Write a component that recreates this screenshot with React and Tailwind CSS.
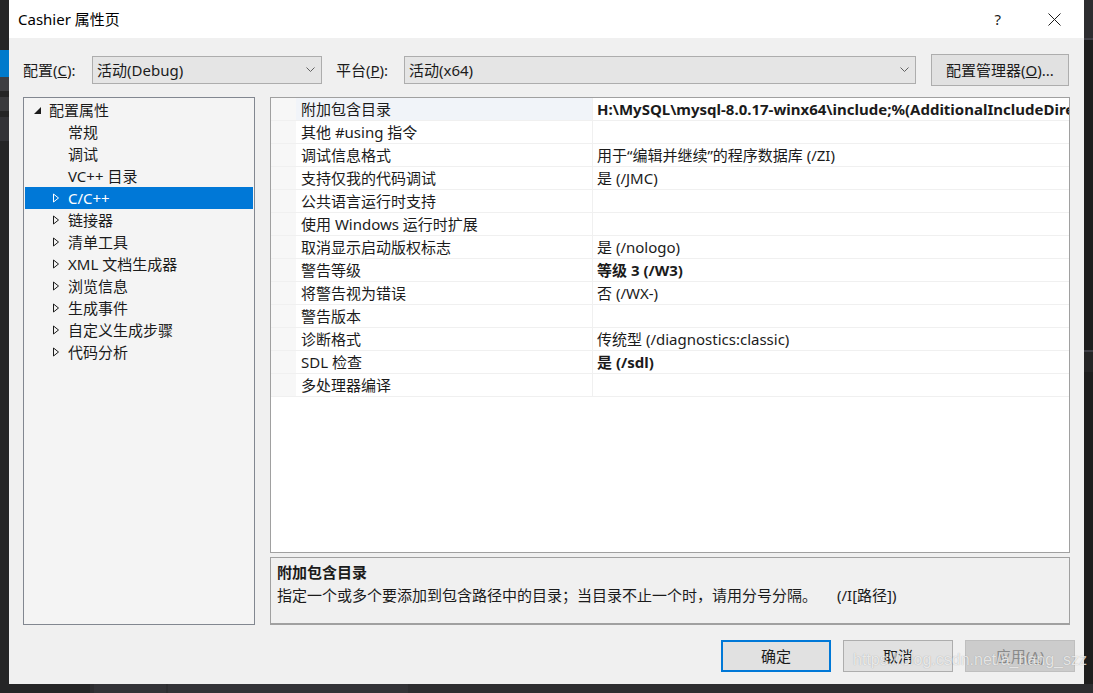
import React from 'react';

const font = { fontFamily: '"Noto Sans", "Noto Sans CJK SC", sans-serif' };

const tree = [
  { label: '常规', kind: 'leaf' },
  { label: '调试', kind: 'leaf' },
  { label: 'VC++ 目录', kind: 'leaf' },
  { label: 'C/C++', kind: 'node', selected: true },
  { label: '链接器', kind: 'node' },
  { label: '清单工具', kind: 'node' },
  { label: 'XML 文档生成器', kind: 'node' },
  { label: '浏览信息', kind: 'node' },
  { label: '生成事件', kind: 'node' },
  { label: '自定义生成步骤', kind: 'node' },
  { label: '代码分析', kind: 'node' },
];

const props = [
  ['附加包含目录', 'H:\\MySQL\\mysql-8.0.17-winx64\\include;%(AdditionalIncludeDirectories)', true],
  ['其他 #using 指令', '', false],
  ['调试信息格式', '用于“编辑并继续”的程序数据库 (/ZI)', false],
  ['支持仅我的代码调试', '是 (/JMC)', false],
  ['公共语言运行时支持', '', false],
  ['使用 Windows 运行时扩展', '', false],
  ['取消显示启动版权标志', '是 (/nologo)', false],
  ['警告等级', '等级 3 (/W3)', true],
  ['将警告视为错误', '否 (/WX-)', false],
  ['警告版本', '', false],
  ['诊断格式', '传统型 (/diagnostics:classic)', false],
  ['SDL 检查', '是 (/sdl)', true],
  ['多处理器编译', '', false],
];

function Chevron() {
  return (
    <svg width="9" height="6" viewBox="0 0 9 6" className="shrink-0">
      <polyline points="0.5,0.5 4.5,4.5 8.5,0.5" fill="none" stroke="#606060" strokeWidth="1" />
    </svg>
  );
}

function Combo({ value, width }) {
  return (
    <div className={`${width} h-[28px] bg-[#e5e5e5] border border-[#adadad] flex items-center justify-between pl-[4px] pr-[6px]`}>
      <span className="text-[15px] leading-none text-[#1b1b1b]">{value}</span>
      <Chevron />
    </div>
  );
}

function TreeRow({ item }) {
  const sel = item.selected;
  return (
    <div className={`h-[22px] flex items-center ${sel ? 'bg-[#0078d7] text-white' : 'text-[#1b1b1b]'}`}>
      <div className="w-[28px] shrink-0" />
      <div className="w-[7px] shrink-0 flex items-center">
        {item.kind === 'node' && (
          <svg width="7" height="10" viewBox="0 0 7 10">
            <polygon points="0.5,1 5.5,5 0.5,9" fill="none" stroke={sel ? '#ffffff' : '#1b1b1b'} strokeWidth="1" />
          </svg>
        )}
      </div>
      <span className="ml-[8px] text-[15px] leading-none whitespace-nowrap">{item.label}</span>
    </div>
  );
}

function Button({ children, primary, disabled }) {
  return (
    <div
      className={`w-[110px] h-[32px] flex items-center justify-center text-[15px] leading-none ${
        primary
          ? 'border-2 border-[#0078d7] bg-[#e1e1e1] text-[#1b1b1b]'
          : disabled
          ? 'border border-[#bfbfbf] bg-[#cccccc] text-[#8a8a8a]'
          : 'border border-[#adadad] bg-[#e1e1e1] text-[#1b1b1b]'
      }`}
    >
      {children}
    </div>
  );
}

export default function App() {
  return (
    <div className="w-[1093px] h-[693px] bg-[#2d2d30] flex flex-col overflow-hidden" style={font}>
      <div className="flex h-[684px]">
        {/* left edge of the IDE behind */}
        <div className="w-[9px] bg-[#252526] flex flex-col">
          <div className="h-[50px]" />
          <div className="h-[27px] bg-[#007acc]" />
          <div className="h-[14px] bg-[#3e3e42]" />
          <div className="h-[6px]" />
          <div className="h-[14px] bg-[#3a3a3d]" />
          <div className="h-[6px]" />
          <div className="h-[24px] bg-[#333337]" />
        </div>

        {/* dialog */}
        <div className="w-[1075px] flex flex-col bg-[#f0f0f0]">
          {/* title bar */}
          <div className="h-[38px] bg-white flex items-center pl-[9px] pr-[23px]">
            <span className="text-[15px] leading-none text-black">Cashier 属性页</span>
            <div className="flex-1" />
            <span className="text-[15px] leading-none text-[#1b1b1b] mr-[47px]">?</span>
            <svg width="13" height="13" viewBox="0 0 13 13">
              <path d="M0.5 0.5 L12.5 12.5 M12.5 0.5 L0.5 12.5" stroke="#1b1b1b" strokeWidth="1" />
            </svg>
          </div>

          <div className="flex flex-col px-[14px] pt-[16px] flex-1">
            {/* configuration row */}
            <div className="flex items-center h-[32px] pr-[1px]">
              <span className="w-[69px] text-[15px] leading-none text-[#1b1b1b]">
                配置(<span className="underline">C</span>):
              </span>
              <Combo value="活动(Debug)" width="w-[230px]" />
              <span className="ml-[14px] w-[68px] text-[15px] leading-none text-[#1b1b1b]">
                平台(<span className="underline">P</span>):
              </span>
              <Combo value="活动(x64)" width="w-[512px]" />
              <div className="ml-[15px] w-[138px] h-[32px] bg-[#e1e1e1] border border-[#adadad] flex items-center justify-center text-[15px] leading-none text-[#1b1b1b]">
                配置管理器(<span className="underline">O</span>)...
              </div>
            </div>

            {/* panels */}
            <div className="flex mt-[11px] h-[528px]">
              {/* tree */}
              <div className="w-[232px] border border-[#828790] bg-[#f4f4f4] pt-[1px] px-[1px]">
                <div className="h-[22px] flex items-center text-[#1b1b1b]">
                  <div className="w-[16px] flex justify-end">
                    <svg width="7" height="7" viewBox="0 0 7 7">
                      <polygon points="7,0 7,7 0,7" fill="#1b1b1b" />
                    </svg>
                  </div>
                  <span className="ml-[8px] text-[15px] leading-none">配置属性</span>
                </div>
                {tree.map((t) => (
                  <TreeRow key={t.label} item={t} />
                ))}
              </div>

              {/* grid + description */}
              <div className="ml-[15px] w-[800px] flex flex-col">
                <div className="h-[456px] border border-[#a0a0a0] bg-white overflow-hidden">
                  {props.map(([name, value, bold], i) => (
                    <div key={name} className="h-[23px] flex border-b border-[#f0f0f0]">
                      <div className="w-[25px] bg-[#f7f7f7] shrink-0" />
                      <div
                        className={`w-[297px] shrink-0 flex items-center pl-[5px] border-r border-[#f0f0f0] text-[15px] leading-none text-[#1b1b1b] whitespace-nowrap ${
                          i === 0 ? 'bg-[#f1f4f9]' : ''
                        }`}
                      >
                        {name}
                      </div>
                      <div
                        className={`flex-1 min-w-0 overflow-hidden flex items-center pl-[4px] text-[15px] leading-none text-[#1b1b1b] whitespace-nowrap ${
                          bold ? 'font-bold' : ''
                        }`}
                      >
                        {value}
                      </div>
                    </div>
                  ))}
                </div>
                <div className="mt-[4px] h-[68px] border border-[#a0a0a0] border-b-2 bg-[#f0f0f0] px-[6px] pt-[5px] text-[#1b1b1b]">
                  <div className="h-[18px] flex items-center text-[15px] leading-none font-bold">附加包含目录</div>
                  <div className="h-[22px] mt-[3px] flex items-center text-[15px] leading-none whitespace-nowrap">
                    指定一个或多个要添加到包含路径中的目录；当目录不止一个时，请用分号分隔。
                    <span className="ml-[20px]">(/I[路径])</span>
                  </div>
                </div>
              </div>
            </div>

            {/* buttons */}
            <div className="flex justify-end gap-[12px] mt-[15px] mr-[-5px] relative">
              <Button primary>确定</Button>
              <Button>取消</Button>
              <Button disabled>
                应用(<span className="underline">A</span>)
              </Button>
              <span
                className="absolute right-[-12px] top-[12px] text-[16px] leading-none text-white/75 whitespace-nowrap"
                style={{ fontFamily: '"Liberation Sans", sans-serif', textShadow: '0 0 1px rgba(0,0,0,0.3)' }}
              >
                https://blog.csdn.net/a_hang_szz
              </span>
            </div>
          </div>
        </div>

        {/* right edge of the IDE behind */}
        <div className="w-[9px] bg-[#1e1e1e] flex flex-col">
          <div className="h-[38px] bg-[#2d2d30]" />
          <div className="h-[2px] bg-[#3f3f46]" />
          <div className="h-[310px]" />
          <div className="h-[2px] bg-[#3f3f46]" />
          <div className="h-[20px] bg-[#252526]" />
        </div>
      </div>

      {/* bottom edge of the IDE behind */}
      <div className="h-[9px] flex bg-[#2d2d30]">
        <div className="w-[90px] bg-[#252526]" />
        <div className="w-[72px] ml-[4px] bg-[#333337]" />
        <div className="w-[240px] ml-[2px] bg-[#333337]" />
      </div>
    </div>
  );
}
